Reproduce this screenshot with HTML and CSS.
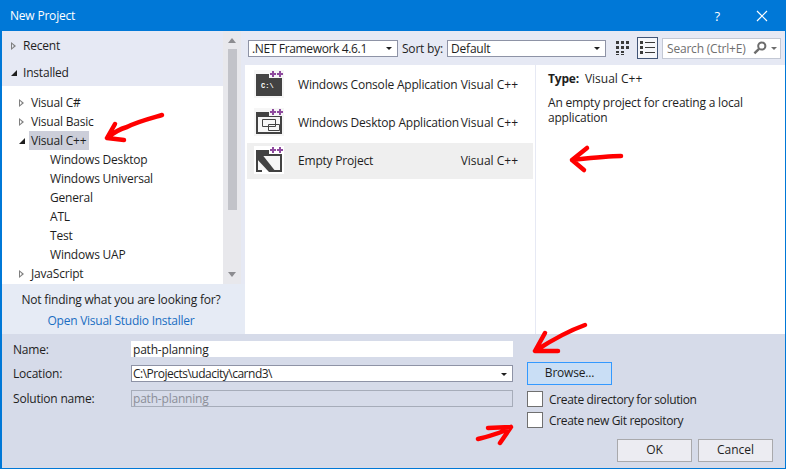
FILE: index.html
```html
<!DOCTYPE html>
<html lang="en">
<head>
<meta charset="utf-8">
<title>New Project</title>
<link rel="stylesheet" href="styles.css">
</head>
<body>
<div class="window">
  <header class="titlebar">
    <span class="title">New Project</span>
    <span class="help">?</span>
    <svg class="close" width="12" height="12" viewBox="0 0 12 12"><path d="M1 1L11 11M11 1L1 11" stroke="#fff" stroke-width="1.2" fill="none"/></svg>
  </header>
  <main class="main">
    <aside class="side">
      <div class="side-body">
        <div class="side-list">
          <div class="nav">
            <div class="nav-row"><span class="tri open-tri"></span>Recent</div>
            <div class="nav-row"><span class="tri solid-tri"></span>Installed</div>
          </div>
          <div class="tree">
            <div class="tree-row"><span class="tri open-tri"></span>Visual C#</div>
            <div class="tree-row"><span class="tri open-tri"></span>Visual Basic</div>
            <div class="tree-row"><span class="tri solid-tri"></span><span class="selected">Visual C++</span></div>
            <div class="tree-row child">Windows Desktop</div>
            <div class="tree-row child">Windows Universal</div>
            <div class="tree-row child">General</div>
            <div class="tree-row child">ATL</div>
            <div class="tree-row child">Test</div>
            <div class="tree-row child">Windows UAP</div>
            <div class="tree-row"><span class="tri open-tri"></span>JavaScript</div>
          </div>
        </div>
        <div class="scrollbar">
          <span class="sb-up"></span>
          <span class="sb-thumb"></span>
          <span class="sb-down"></span>
        </div>
      </div>
      <div class="side-foot">
        <div>Not finding what you are looking for?</div>
        <a class="link">Open Visual Studio Installer</a>
      </div>
    </aside>
    <section class="content">
      <div class="toolbar">
        <div class="select fw"><span>.NET Framework 4.6.1</span><i class="caret"></i></div>
        <span class="sort-label">Sort by:</span>
        <div class="select sort"><span>Default</span><i class="caret"></i></div>
        <svg class="view-btn" width="14" height="14" viewBox="0 0 14 14" fill="#3a3a3a"><path d="M0 0h3v3H0zM5 0h3v3H5zM10 0h3v3h-3zM0 5h3v3H0zM5 5h3v3H5zM10 5h3v3h-3zM0 10h3v2H0zM5 10h3v2H5zM0 13h3v1H0zM5 13h3v1H5z"/></svg>
        <div class="list-btn"><svg width="15" height="14" viewBox="0 0 15 14" fill="#3a3a3a"><path d="M0 0h3v3H0zM5 1h10v1H5zM0 5h3v3H0zM5 6h10v1H5zM0 10h3v3H0zM5 11h10v1H5z"/></svg></div>
        <div class="search"><span class="search-text">Search (Ctrl+E)</span>
          <svg width="14" height="14" viewBox="0 0 14 14"><circle cx="8.8" cy="5" r="3.6" fill="none" stroke="#6d6d6d" stroke-width="2"/><path d="M6 7.8L1.4 12.4" stroke="#6d6d6d" stroke-width="2.4"/></svg>
          <i class="caret small"></i></div>
      </div>
      <div class="panes">
        <div class="templates">
          <div class="tpl">
            <svg class="tpl-icon" width="32" height="32" viewBox="0 0 32 32"><rect x="1" y="2" width="30" height="28" fill="#f6f6f6"/><path d="M3 6h13v4h13v18H3z" fill="#424242"/><rect x="16" y="2" width="15" height="8" fill="#f6f6f6"/><path class="plus" d="M19 3h2v2h2v2h-2v2h-2V7h-2V5h2zM26 3h2v2h2v2h-2v2h-2V7h-2V5h2z"/><text x="8" y="20" class="prompt">C:\</text></svg>
            <span class="tpl-name">Windows Console Application</span><span class="tpl-lang">Visual C++</span>
          </div>
          <div class="tpl">
            <svg class="tpl-icon" width="32" height="32" viewBox="0 0 32 32"><rect x="1" y="2" width="30" height="28" fill="#f6f6f6"/><path d="M3 6h13v4h13v18H3z" fill="#424242"/><rect x="16" y="2" width="15" height="8" fill="#f6f6f6"/><path d="M5 11h22v15H5z" fill="#f6f6f6"/><path d="M9.500 13.500h13v7h-13zM15.500 18.500h11v6h-11z" fill="#f6f6f6" stroke="#424242"/><path class="plus" d="M19 3h2v2h2v2h-2v2h-2V7h-2V5h2zM26 3h2v2h2v2h-2v2h-2V7h-2V5h2z"/></svg>
            <span class="tpl-name">Windows Desktop Application</span><span class="tpl-lang">Visual C++</span>
          </div>
          <div class="tpl active">
            <svg class="tpl-icon" width="32" height="32" viewBox="0 0 32 32"><rect x="1" y="2" width="30" height="28" fill="#fff"/><path d="M5 11h22v15H5z" fill="#f6f6f6"/><path d="M3 6h13v4h13v18h-8v-2h6V12H5v14h4v2H3z" fill="#424242"/><path d="M3 9h5l15 19h-7L3 14z" fill="#424242"/><rect x="16" y="2" width="15" height="7" fill="#fff"/><path class="plus" d="M19 3h2v2h2v2h-2v2h-2V7h-2V5h2zM26 3h2v2h2v2h-2v2h-2V7h-2V5h2z"/></svg>
            <span class="tpl-name">Empty Project</span><span class="tpl-lang">Visual C++</span>
          </div>
        </div>
        <div class="details">
          <p class="type"><b>Type:</b><span>Visual C++</span></p>
          <p class="desc">An empty project for creating a local application</p>
        </div>
      </div>
    </section>
  </main>
  <form class="form">
    <div class="fields">
      <label class="lbl">Name:</label>
      <div class="input plain">path-planning</div>
      <label class="lbl">Location:</label>
      <div class="input combo"><span class="path">C:\Projects\udacity\carnd3\</span><i class="caret"></i></div>
      <label class="lbl">Solution name:</label>
      <div class="input disabled">path-planning</div>
    </div>
    <div class="options">
      <div class="browse">Browse...</div>
      <div class="check"><span class="box"></span>Create directory for solution</div>
      <div class="check git"><span class="box"></span>Create new Git repository</div>
      <div class="actions"><div class="btn">OK</div><div class="btn">Cancel</div></div>
    </div>
  </form>
  <svg class="marks" width="786" height="469" viewBox="0 0 786 469" fill="none" stroke="#f00" stroke-linecap="round" stroke-linejoin="round">
    <g stroke-width="4.5">
      <path d="M162 115C148 119 136 122 127 127C120 129 113 133 107 138L124 140M107 138L115 124"/>
      <path d="M621 156C607 156 590 158 572 160L584 170M572 160L587 148"/>
      <path d="M585 325C568 331 552 340 535 351L558 351M535 351L545 333"/>
      <path d="M478 439C490 436 503 433 511 427L500 443M511 427L488 428"/>
    </g>
  </svg>
</div>
</body>
</html>
```

FILE: styles.css
```css
* { box-sizing: border-box; }
html, body { margin: 0; padding: 0; }
body { width: 786px; height: 469px; overflow: hidden; font-family: "Open Sans", "Noto Sans", sans-serif; font-size: 12px; letter-spacing: -0.2px; color: #1e1e1e; }
.window { position: relative; width: 786px; height: 469px; display: flex; flex-direction: column; background: #d6dbe9; border: solid #0078d7; border-width: 0 1px 1px 2px; }
.titlebar { flex: none; height: 31px; background: #0078d7; color: #fff; display: flex; align-items: center; margin-left: -2px; padding-left: 10px; }
.title { flex: 1; }
.help { margin-right: 36px; font-size: 13px; }
.close { margin-right: 17px; }

.main { flex: none; height: 303px; display: flex; background: #e6e9f4; }
.side { flex: none; width: 243px; display: flex; flex-direction: column; }
.side-body { flex: none; height: 253px; display: flex; }
.side-list { flex: none; width: 221px; display: flex; flex-direction: column; }
.nav { flex: none; height: 55px; padding-top: 1px; }
.nav-row { height: 27px; display: flex; align-items: center; padding-left: 21px; position: relative; --tri-bg: #e6e9f4; }
.nav-row .tri { left: 9px; }
.tree { flex: 1; background: #fff; padding-top: 7px; --tri-bg: #fff; }
.tree-row { height: 19px; display: flex; align-items: center; padding-left: 29px; position: relative; }
.tree-row .tri { left: 17px; }
.tree-row.child { padding-left: 48px; }
.selected { background: #ccced9; margin-left: -2px; padding: 0 3px 0 2px; height: 19px; line-height: 19px; }
.tri { position: absolute; top: 50%; width: 0; height: 0; }
.open-tri { margin-top: -4px; border-style: solid; border-width: 4px 0 4px 5px; border-color: transparent transparent transparent #7f7f7f; }
.open-tri::after { content: ""; position: absolute; left: -4px; top: -2px; width: 0; height: 0; border-style: solid; border-width: 2px 0 2px 2.5px; border-color: transparent transparent transparent var(--tri-bg); }
.solid-tri { margin-top: -3px; border-style: solid; border-width: 0 0 6px 6px; border-color: transparent transparent #1e1e1e transparent; }
.scrollbar { flex: none; width: 18px; background: #e8e8ec; display: flex; flex-direction: column; align-items: center; position: relative; }
.sb-up { margin-top: 7px; border-style: solid; border-width: 0 4.5px 5px; border-color: transparent transparent #8c8c90; height: 0; width: 0; }
.sb-thumb { width: 9px; height: 161px; background: #c2c3c9; margin-top: 6px; }
.sb-down { margin-top: auto; margin-bottom: 7px; border-style: solid; border-width: 5px 4.5px 0; border-color: #8c8c90 transparent transparent; height: 0; width: 0; }
.side-foot { flex: 1; background: #e6ebf5; width: 243px; text-align: center; padding-right: 5px; display: flex; flex-direction: column; gap: 4px; padding-top: 7px; line-height: 17px; }
.link { color: #1b6ec2; letter-spacing: -0.25px; }

.content { flex: 1; display: flex; flex-direction: column; min-width: 0; }
.toolbar { flex: none; height: 34px; display: flex; align-items: center; padding-left: 3px; }
.select { flex: none; height: 17px; display: flex; align-items: center; background: #fff; border: 1px solid #8e93a6; padding-left: 3px; line-height: 15px; position: relative; white-space: nowrap; }
.fw { width: 150px; letter-spacing: -0.35px; }
.sort { width: 159px; }
.sort-label { flex: none; width: 49px; text-align: center; white-space: nowrap; }
.caret { position: absolute; right: 5px; top: 50%; margin-top: -1px; border-style: solid; border-width: 3px 3px 0; border-color: #1e1e1e transparent transparent; width: 0; height: 0; }
.view-btn { flex: none; margin-left: 10px; }
.list-btn { flex: none; width: 21px; height: 22px; margin-left: 7px; border: 1px solid #425577; background: #f5f6fa; display: flex; align-items: center; justify-content: center; }
.search { flex: none; width: 119px; height: 21px; margin-left: 4px; background: #fff; border: 1px solid #c3c8d4; display: flex; align-items: center; padding-left: 4px; position: relative; color: #6f6f6f; white-space: nowrap; }
.search-text { flex: 1; }
.search svg { margin-right: 13px; }
.caret.small { border-color: #6d6d6d transparent transparent; right: 3px; }

.panes { flex: 1; display: flex; background: #fff; }
.templates { flex: none; width: 291px; padding: 2px 2px 0 2px; display: flex; flex-direction: column; gap: 2px; background: #fff; border-right: 1px solid #e6e9f4; }
.tpl { height: 36px; display: flex; align-items: center; padding: 0 0 2px 6px; }
.tpl.active { background: #efefef; }
.tpl-icon { flex: none; margin-right: 13px; }
.plus { fill: #8e4a9e; }
.tpl-name { flex: 1; white-space: nowrap; }
.tpl-lang { margin-right: 15px; white-space: nowrap; letter-spacing: 0; }
.prompt { font-family: "Liberation Mono", monospace; font-size: 7px; font-weight: 700; fill: #fff; letter-spacing: 0; }
.details { flex: 1; padding: 6px 12px; }
.details p { margin: 0; line-height: 15px; }
.type { margin-bottom: 9px !important; }
.type span { margin-left: 6px; letter-spacing: 0; }
.desc { width: 230px; }

.form { flex: 1; display: flex; padding: 7px 0 0 11px; }
.fields { flex: none; width: 502px; align-self: flex-start; display: grid; grid-template-columns: 118px 382px; grid-template-rows: 16px 17px 17px; row-gap: 8px; align-items: center; }
.lbl { color: #1e1e1e; }
.input { height: 100%; line-height: 15px; padding-left: 1px; background: #fff; border: 1px solid #fff; position: relative; white-space: nowrap; }
.combo { border-color: #8e93a6; }
.path { letter-spacing: -0.5px; }
.disabled { background: #d6dbe9; border-color: #a6acb9; color: #8b8e98; }
.options { flex: 1; padding: 21px 0 0 12px; position: relative; }
.browse { width: 85px; height: 23px; background: #c9def5; border: 1px solid #3399ff; text-align: center; line-height: 20px; }
.check { display: flex; align-items: center; height: 16px; margin-top: 6px; gap: 6px; letter-spacing: -0.35px; }
.git { margin-top: 5px; }
.box { width: 16px; height: 16px; background: #fff; border: 1px solid #707070; }
.actions { display: flex; gap: 6px; justify-content: flex-end; margin-top: 11px; padding-right: 12px; letter-spacing: 0; }
.btn { width: 75px; height: 23px; background: #ececf2; border: 1px solid #a9a9ac; text-align: center; line-height: 20px; }

.marks { position: absolute; left: -2px; top: 0; pointer-events: none; }
```
